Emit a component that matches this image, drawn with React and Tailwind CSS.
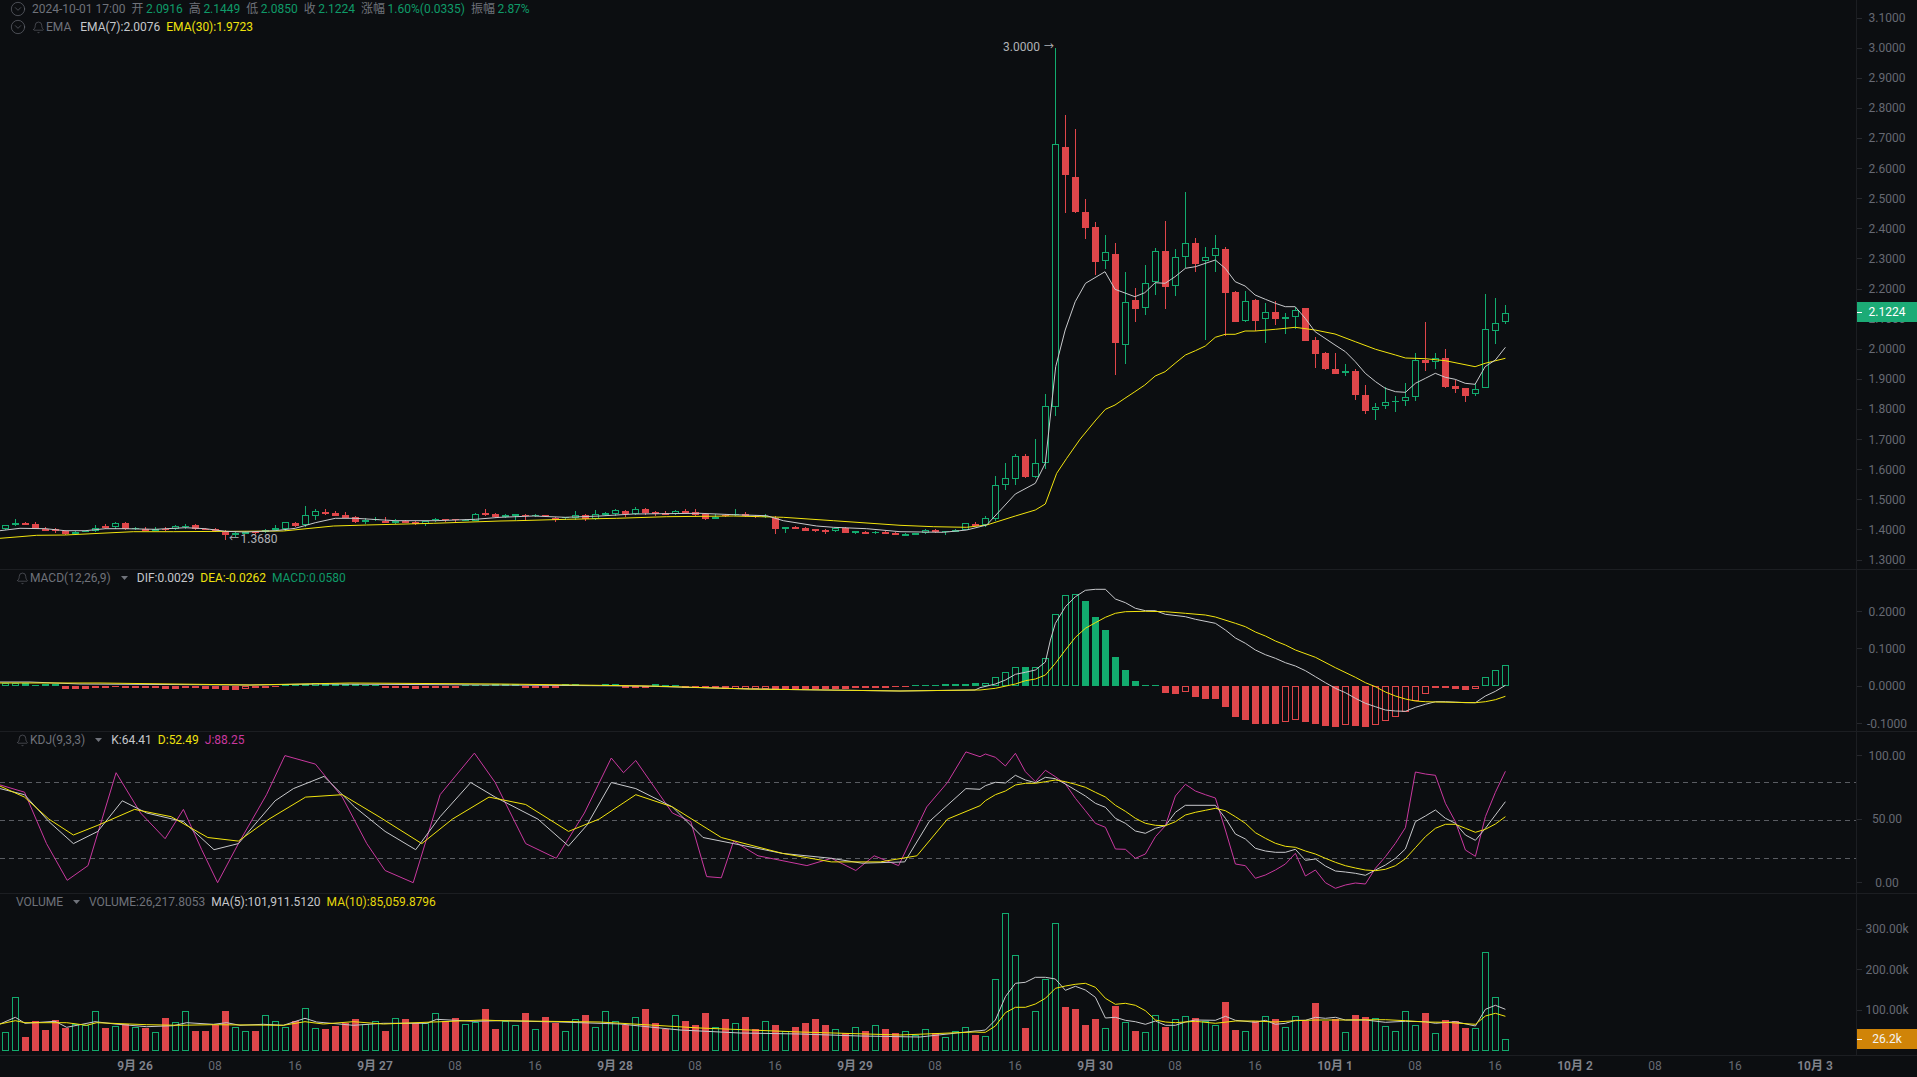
import { Bell, CircleChevronDown } from 'lucide-react'

const GREEN = '#12ab6e'
const RED = '#e0464a'
const BG = '#0c0e11'
const LINE_WHITE = '#c8c9cc'
const LINE_YELLOW = '#f2e40e'
const LINE_PINK = '#c9389f'

// Puntos calcados del gráfico: (x, y) de cada recorte a coordenadas de página
const trace = (x0, y0, sx, sy, pts) => pts.map(([x, y]) => [x0 + x / sx, y0 + y / sy])
const overview = pts => pts.map(([x, y]) => [x * 1.2226, y * 1.2226])
const toPoints = pts => pts.map(([x, y]) => `${x.toFixed(1)},${y.toFixed(1)}`).join(' ')

// [tipo, mecha alta, cuerpo arriba, cuerpo abajo, mecha baja] g hueca, s verde sólida, r roja
const candles = [
  ...[
    ['g',74,76,86,90],['g',58,70,76,80],['r',66,70,74,76],['r',66,73,86,88],['r',82,86,92,94],['r',84,87,92,100],['r',90,93,101,106],['g',92,96,101,104],['s',91,92,94,96],['g',76,83,94,97],
    ['r',72,78,83,88],['g',66,70,82,86],['r',66,70,88,90],['s',82,85,88,90],['r',82,86,92,94],['g',82,87,92,94],['r',80,86,88,92],['g',76,79,87,90],['s',72,78,82,88],['r',72,76,88,90],
    ['r',84,86,89,90],['r',84,88,93,95],['r',90,95,105,120],['s',96,100,105,110],['g',92,95,100,102],['r',92,95,98,100],['g',86,89,97,99],['s',76,85,91,94],['g',66,67,86,92],['r',66,70,78,82],
    ['g',18,46,76,82],['g',28,34,47,60],['r',26,36,42,44],['r',34,39,48,50],['r',36,45,53,55],['r',48,52,65,70],['s',54,60,66,72],['s',52,57,61,64],['r',52,62,69,70],['g',56,63,68,70],
    ['r',60,64,68,70],['r',64,67,72,76],['g',62,62,73,76],['s',55,58,61,66],['r',56,58,61,64],['r',56,58,61,64],['s',58,59,62,64],['g',40,41,62,64],['r',28,40,45,50],['r',40,42,51,54],
    ['s',42,46,51,54],['s',42,43,48,60],['r',42,46,48,62],['s',42,46,49,52],['r',45,46,49,52],['r',52,53,61,68],['s',52,52,54,62],['g',32,46,54,60],['r',42,46,57,62],['g',30,43,57,60],
    ['s',36,40,46,48],['g',28,31,41,48],['r',30,33,42,52],['g',22,28,41,46],['r',24,27,39,46],['r',34,37,41,48],['r',34,40,44,46],['g',30,34,43,46],['r',28,34,38,40],['r',28,37,44,48],
    ['r',38,43,56,58],['g',42,50,56,58],['r',42,46,47,50],['s',28,43,46,50],['r',36,42,47,52],['r',44,47,51,54],['s',42,48,52,54],['r',48,54,87,102],['s',80,82,86,98],['r',78,81,87,88],
    ['r',82,84,92,94],['r',86,87,92,94],['r',88,90,95,102],['g',84,85,94,96],['r',82,85,98,100],['s',92,94,98,102],['r',94,96,101,102],['s',92,95,98,100],['r',92,95,101,102],['r',96,98,104,105],
    ['g',98,102,104,105],['s',98,100,104,105],['g',86,91,100,102],['r',86,91,96,98],['s',92,94,96,104],['g',88,91,96,98],
  ].map(([k, ...v]) => [k, ...v.map(z => 500 + z / 3)]),
  ...[
    ['g',430,430,450,452],['r',426,432,438,438],['g',408,415,436,440],['g',288,316,416,422],['g',250,295,316,330],['g',222,229,298,315],['r',222,228,290,295],['g',178,250,290,296],['g',42,79,250,266],
  ].map(([k, ...v]) => [k, ...v.map(z => 380 + z / 3)]),
  ...[
    ['g',85,373,1160,1188],['r',285,381,464,580],['r',328,472,575,580],['r',536,576,623,656],['r',605,622,725,765],['g',646,697,724,748],['r',670,703,968,1067],['g',757,847,974,1032],['r',803,840,866,905],['g',736,788,865,885],
    ['g',685,694,787,825],['r',603,694,800,868],['g',687,712,799,828],['g',517,670,712,745],['r',655,670,731,757],['g',680,712,724,958],['g',644,685,709,754],['r',680,688,818,948],['r',812,817,905,905],['g',813,842,904,905],
    ['r',838,840,902,935],['g',848,877,898,967],['r',843,877,896,916],['s',880,892,896,943],['g',860,869,892,925],['r',865,865,962,965],['r',950,961,1001,1042],['r',995,999,1047,1050],['r',1000,1047,1061,1064],['g',1032,1053,1060,1068],
    ['r',1046,1053,1124,1140],['r',1096,1126,1172,1184],['g',1150,1160,1171,1200],['g',1100,1147,1159,1165],['s',1127,1144,1147,1175],['g',1090,1132,1142,1160],['g',998,1021,1132,1142],['r',905,1020,1028,1053],['g',1000,1015,1027,1048],['r',988,1015,1100,1105],
    ['r',1080,1098,1106,1118],['r',1105,1105,1127,1148],['g',1093,1106,1123,1128],['g',822,926,1105,1105],['g',835,908,934,972],['g',856,878,907,912],
  ].map(([k, ...v]) => [k, ...v.map(z => 20 + z / 3)]),
]

const ema7 = [
  ...trace(0, 500, 3, 3, [[0,92],[60,85],[136,86],[196,92],[256,92],[316,86],[376,86],[466,88],[556,83],[616,86],[676,94],[736,96],[826,92],[886,85],[946,68],[1006,55],[1066,55],[1186,62],[1306,62],[1426,58],[1500,52]]),
  ...trace(500, 500, 3, 3, [[100,48],[196,52],[300,48],[400,42],[600,40],[700,44],[800,47],[850,62],[950,78],[1000,82],[1100,86],[1200,95],[1330,97],[1400,90]]),
  ...trace(960, 380, 3, 3, [[80,435],[166,342],[226,310],[256,250]]),
  ...trace(960, 20, 2.613, 3, [[250,1040],[275,930],[301,845],[328,790],[379,755],[405,808],[457,830],[483,818],[510,788],[536,790],[562,770],[589,745],[615,740],[667,720],[693,745],[719,785],[745,798],[771,825],[798,838],[824,850],[850,860],[876,860],[902,895],[928,935],[980,975],[1007,995],[1033,1025],[1059,1060],[1086,1085],[1111,1105],[1138,1115],[1164,1117],[1190,1090],[1216,1075],[1242,1060],[1268,1072],[1294,1078],[1320,1090],[1346,1093],[1372,1040],[1399,1020],[1425,982]]),
]
const ema30 = [
  ...trace(0, 500, 3, 3, [[0,115],[60,110],[110,106],[196,105],[300,100],[400,95],[520,95],[700,94],[850,93],[1000,78],[1100,75],[1300,70],[1500,63]]),
  ...trace(500, 500, 3, 3, [[50,62],[200,58],[350,55],[500,50],[700,48],[850,52],[1000,62],[1200,76],[1300,80],[1400,82]]),
  ...trace(960, 380, 3, 3, [[80,435],[166,408],[226,390],[256,372],[290,280],[320,235],[360,178]]),
  ...trace(960, 20, 2.613, 3, [[355,1200],[380,1168],[405,1155],[431,1135],[457,1115],[483,1095],[510,1068],[536,1055],[562,1030],[589,1005],[615,992],[641,978],[667,952],[693,943],[719,943],[745,933],[771,933],[824,928],[876,922],[928,930],[980,942],[1033,965],[1086,988],[1138,1005],[1164,1014],[1216,1016],[1268,1022],[1346,1040],[1372,1030],[1425,1015]]),
]

// MACD: altura en px hasta la vela 97 (negativo = rojo)
const macdLeft = [3,3,3,1,2,2,-3,-3,-3,-2,-2,-1,-2,-2,-2,-2,-3,-3,-2,-2,-3,-3,-4,-4,-3,-2,-2,-1,1,1,2,3,3,2,2,2,1,1,-2,-2,-2,-3,-2,-2,-2,-2,1,1,1,2,2,2,-2,-2,-2,-2,2,2,1,1,2,2,-2,-2,-2,2,1,1,-2,-2,-2,-2,-3,-3,-3,-3,-3,-4,-3,-3,-3,-3,-3,-3,-3,-2,-2,-2,-2,-1,-1,1,1,1,2,2,2,3]
const macdHollow = new Set([0, 1, 24, 25, 26, 30, 31, 73, 74, 75, 76])
const macdRight = [
  ['h',368],['h',350],['h',337],['h',320],['s',322],['h',322],['h',295],['h',163],['h',106],['h',103],['s',123],['s',171],['s',210],['s',291],['s',330],['s',363],['s',376],['s',376],
  ['s',398],['s',401],['h',397],['s',411],['s',416],['s',416],['s',440],['s',470],['s',479],['s',491],['s',491],['s',491],['h',487],['h',479],['s',485],['s',491],['s',497],['s',500],['h',494],['s',497],['s',500],['h',494],['h',482],['h',470],['h',455],['h',422],['h',401],['s',384],['s',384],['s',387],['s',390],['h',386],
  ['h',352],['h',331],['h',316],
]
const macdDif = [
  ...[[0,682],[30,682],[80,684],[250,685],[320,684],[500,685],[640,686],[750,689],[900,691],[975,690]],
  ...trace(980, 560, 2.8, 3, [[0,383],[43,372],[71,360],[99,343],[127,337],[155,330],[183,306],[197,240],[211,190],[239,140],[267,110],[295,91],[323,88],[351,88],[379,117],[407,128],[435,145],[463,152],[491,152],[519,163],[575,170],[603,178],[659,190],[687,210],[715,234],[743,250],[771,270],[799,284],[827,295],[855,308],[883,318],[911,332],[939,350],[967,368],[995,385],[1023,398],[1051,415],[1079,430],[1107,440],[1135,450],[1163,453],[1191,454],[1219,442],[1247,433],[1275,425],[1303,425],[1359,428],[1387,428],[1415,408],[1443,394],[1471,376]]),
]
const macdDea = [
  ...[[0,683],[100,683],[250,685],[350,683],[500,684],[650,686],[750,689],[900,691],[975,690]],
  ...trace(980, 560, 2.8, 3, [[0,390],[43,385],[99,372],[127,362],[155,357],[183,345],[211,310],[239,270],[267,232],[295,205],[323,188],[351,172],[379,160],[407,155],[463,154],[519,155],[575,160],[631,165],[659,171],[715,190],[743,200],[771,216],[799,228],[827,243],[855,255],[883,270],[939,292],[995,323],[1051,352],[1079,368],[1107,380],[1135,396],[1163,408],[1191,417],[1219,423],[1247,425],[1275,426],[1331,427],[1387,428],[1415,425],[1443,419],[1471,409]]),
]

const kdjJ = [
  ...overview([[0,642],[20,648],[38,690],[55,720],[72,708],[95,632],[115,665],[135,686],[150,662],[165,695],[178,722],[195,690],[218,650],[233,618],[258,625],[280,652],[300,690],[315,712],[338,722],[360,650],[388,616],[405,640],[430,690],[455,702],[478,665],[500,620],[510,632],[520,622],[550,665],[565,672],[578,717],[590,718],[600,688],[620,700],[660,708],[680,702],[700,712],[715,700],[735,708],[758,660],[775,640],[790,615]]),
  ...trace(980, 560, 2.8, 3, [[0,590],[15,582],[43,592],[71,618],[99,580],[127,635],[155,665],[183,631],[211,650],[239,672],[267,715],[295,752],[323,790],[351,802],[379,867],[407,868],[435,895],[463,882],[491,830],[519,797],[547,708],[575,673],[603,693],[631,704],[659,714],[687,810],[715,912],[743,917],[771,955],[799,945],[827,930],[855,912],[883,880],[911,948],[939,930],[967,968],[995,985],[1023,975],[1051,969],[1079,972],[1107,925],[1135,890],[1163,850],[1191,803],[1219,636],[1247,642],[1275,646],[1303,730],[1331,785],[1359,870],[1387,889],[1415,770],[1443,697],[1471,634]]),
]
const kdjK = [
  ...overview([[0,645],[20,650],[40,672],[60,690],[80,680],[100,655],[120,665],[150,672],[175,695],[195,690],[225,655],[240,645],[265,635],[290,660],[315,680],[340,695],[360,668],[385,640],[405,652],[440,670],[465,692],[480,675],[500,640],[520,645],[550,660],[575,685],[600,690],[640,698],[680,702],[705,706],[740,705],[760,672],[790,645]]),
  ...trace(980, 560, 2.8, 3, [[0,688],[15,677],[43,667],[71,669],[99,646],[127,660],[155,668],[183,652],[211,656],[239,672],[267,690],[295,708],[323,730],[351,742],[379,775],[407,790],[435,813],[463,820],[491,805],[519,797],[547,757],[575,736],[659,736],[687,775],[715,822],[743,837],[771,865],[799,873],[827,877],[855,877],[883,868],[911,901],[939,897],[967,918],[995,933],[1023,936],[1051,940],[1079,946],[1107,930],[1135,915],[1163,895],[1191,867],[1219,785],[1247,768],[1275,750],[1303,775],[1331,790],[1359,825],[1387,841],[1415,805],[1443,765],[1471,725]]),
]
const kdjD = [
  ...overview([[0,643],[20,652],[40,670],[60,683],[80,675],[110,662],[140,668],[170,685],[195,688],[220,670],[250,652],[280,650],[310,668],[345,690],[370,670],[400,652],[430,658],[465,680],[490,670],[520,650],[550,660],[590,685],[640,698],[680,705],[720,705],[750,700],[775,670]]),
  ...trace(980, 560, 2.8, 3, [[0,737],[15,722],[43,704],[71,693],[99,675],[127,670],[155,670],[183,665],[211,660],[239,665],[267,673],[295,682],[323,697],[351,711],[379,736],[407,754],[435,775],[463,790],[491,796],[519,797],[547,785],[575,765],[603,757],[631,751],[659,745],[687,752],[715,770],[743,790],[771,818],[799,835],[827,850],[855,859],[883,862],[911,873],[939,882],[967,895],[995,907],[1023,917],[1051,924],[1079,930],[1107,932],[1135,928],[1163,917],[1191,896],[1219,863],[1247,830],[1275,805],[1303,793],[1331,793],[1359,805],[1387,817],[1415,808],[1443,792],[1471,770]]),
]

const VOL_BASE = 1051
const volLeft = [
  ['g',455],['g',352],['r',471],['r',424],['r',450],['r',420],['r',444],['g',431],['g',434],['g',394],['r',444],['g',439],['r',432],['g',441],['r',444],['g',457],['r',414],['g',427],['g',394],['r',453],['r',453],['r',435],['r',393],['g',441],['g',454],
  ['r',453],['g',406],['g',424],['g',441],['r',423],['g',385],['g',445],['r',447],['r',438],['r',430],['r',417],['g',432],['g',424],['r',453],['g',415],['r',417],['r',430],['g',430],['g',400],['r',424],['r',414],['g',433],['g',427],['r',387],['r',447],
]
const volMid = [30,26,38,22,34,28,20,32,36,24,40,30,26,34,42,28,22,36,30,26,38,24,32,28,34,22,30,26,20,24,28,32,26,22,18,24,20,26,22,18,20,16,22,18,14,20,24,16]
const volRight = [
  ['g',469],['g',298],['g',100],['g',226],['r',444],['g',394],['g',298],['g',130],['r',381],['r',387],['r',435],['r',417],['g',445],['r',378],['g',427],['r',453],['g',457],['g',406],['r',441],['g',418],['g',409],['r',414],['g',423],['g',436],['r',366],['r',450],
  ['g',454],['r',423],['g',409],['r',417],['g',442],['g',409],['r',423],['r',369],['r',423],['r',417],['g',457],['r',405],['r',411],['g',414],['g',439],['g',454],['g',394],['g',436],['r',399],['g',460],['r',420],['r',423],['r',444],['g',445],['g',217],['g',352],['g',478],
]
const volBars = [
  ...volLeft.map(([c, z]) => [c, 880 + z / 3]),
  ...volMid.map((h, i) => [candles[50 + i][0] === 'r' ? 'r' : 'g', VOL_BASE - h]),
  ...volRight.map(([c, z]) => [c, 880 + z / 3]),
]
const volMa5 = [
  ...trace(0, 880, 3, 3, [[0,432],[46,412],[75,430],[165,424],[200,442],[240,434],[285,425],[345,432],[440,440],[520,437],[560,428],[640,433],[680,428],[720,436],[790,433],[850,436],[915,415],[950,426],[1060,436],[1150,430],[1280,430],[1310,418],[1420,424],[1500,422]]),
  ...[[560,1022],[620,1024],[680,1030],[740,1033],[800,1034],[860,1036],[920,1037],[975,1031]],
  ...trace(980, 880, 2.8, 3, [[0,452],[15,450],[43,420],[71,350],[99,310],[127,307],[155,292],[183,292],[211,297],[239,331],[267,319],[295,330],[323,352],[351,414],[379,412],[407,421],[435,425],[463,433],[491,423],[519,436],[547,436],[575,426],[603,420],[659,421],[687,409],[715,421],[771,427],[799,421],[827,433],[855,430],[883,421],[911,421],[939,412],[967,415],[995,412],[1023,420],[1079,420],[1135,427],[1191,424],[1247,425],[1275,430],[1331,425],[1387,438],[1415,388],[1443,376],[1471,388]]),
]
const volMa10 = [
  ...trace(0, 880, 3, 3, [[0,432],[46,422],[75,428],[200,428],[260,436],[290,428],[440,434],[540,436],[640,434],[850,436],[915,425],[970,432],[1060,425],[1150,432],[1300,426],[1450,420],[1500,422]]),
  ...[[600,1022],[700,1028],[800,1032],[900,1035],[975,1032]],
  ...trace(980, 880, 2.8, 3, [[0,457],[15,457],[43,438],[71,398],[99,382],[127,382],[155,372],[183,355],[211,325],[239,318],[267,313],[295,310],[323,322],[351,355],[379,373],[407,370],[435,376],[463,392],[491,420],[519,426],[547,428],[603,424],[659,430],[715,423],[771,423],[827,426],[883,422],[939,420],[1023,420],[1135,419],[1191,422],[1247,426],[1303,427],[1387,433],[1415,408],[1443,400],[1471,409]]),
]

function Bar({ i, y0, y1, color, hollow }) {
  const top = Math.round(Math.min(y0, y1))
  const bottom = Math.round(Math.max(y0, y1))
  const x = i * 10 + 2
  if (hollow) {
    return <rect x={x + 0.5} y={top + 0.5} width={6} height={Math.max(bottom - top - 1, 1)} fill={BG} stroke={color} strokeWidth={1} />
  }
  return <rect x={x} y={top} width={7} height={Math.max(bottom - top, 1)} fill={color} />
}

function Line({ points, color }) {
  return <polyline points={toPoints(points)} fill="none" stroke={color} strokeWidth={1} strokeLinejoin="round" />
}

function PriceChart() {
  return (
    <svg className="block w-full h-full" viewBox="0 0 1857 569">
      <g shapeRendering="crispEdges">
        {candles.map(([kind, hi, top, bottom, lo], i) => {
          const color = kind === 'r' ? RED : GREEN
          return (
            <g key={i}>
              <rect x={i * 10 + 5} y={Math.round(hi)} width={1} height={Math.max(Math.round(lo - hi), 1)} fill={color} />
              <Bar i={i} y0={top} y1={bottom} color={color} hollow={kind === 'g'} />
            </g>
          )
        })}
      </g>
      <Line points={ema30} color={LINE_YELLOW} />
      <Line points={ema7} color={LINE_WHITE} />
    </svg>
  )
}

function MacdChart() {
  return (
    <svg className="block w-full h-full" viewBox="0 570 1857 161">
      <g shapeRendering="crispEdges">
        {macdLeft.map((h, i) => (
          <Bar key={i} i={i} y0={686} y1={686 - h} color={h > 0 ? GREEN : RED} hollow={macdHollow.has(i)} />
        ))}
        {macdRight.map(([kind, z], i) => (
          <Bar key={i} i={i + 98} y0={686} y1={560 + z / 3} color={z < 378 ? GREEN : RED} hollow={kind === 'h'} />
        ))}
      </g>
      <Line points={macdDif} color={LINE_WHITE} />
      <Line points={macdDea} color={LINE_YELLOW} />
    </svg>
  )
}

function KdjChart() {
  return (
    <svg className="block w-full h-full" viewBox="0 732 1857 161">
      {[782, 820, 858].map(y => (
        <line key={y} x1={0} x2={1857} y1={y + 0.5} y2={y + 0.5} stroke="#5a5c62" strokeWidth={1} strokeDasharray="5 4" />
      ))}
      <Line points={kdjJ} color={LINE_PINK} />
      <Line points={kdjK} color={LINE_WHITE} />
      <Line points={kdjD} color={LINE_YELLOW} />
    </svg>
  )
}

function VolumeChart() {
  return (
    <svg className="block w-full h-full" viewBox="0 894 1857 161">
      <g shapeRendering="crispEdges">
        {volBars.map(([c, top], i) => (
          <Bar key={i} i={i} y0={VOL_BASE} y1={top} color={c === 'r' ? RED : GREEN} hollow={c === 'g'} />
        ))}
      </g>
      <Line points={volMa5} color={LINE_WHITE} />
      <Line points={volMa10} color={LINE_YELLOW} />
    </svg>
  )
}

function Caret() {
  return (
    <svg width="7" height="4" viewBox="0 0 7 4" className="shrink-0">
      <path d="M0 0h7L3.5 4z" fill="#6f727a" />
    </svg>
  )
}

function AxisRow({ label, className }) {
  return (
    <div className={`relative flex items-center justify-center shrink-0 ${className}`}>
      <span className="absolute left-0 w-[5px] h-px bg-[#26282d]" />
      <span>{label}</span>
    </div>
  )
}

function Pane({ className, axis, children }) {
  return (
    <div className={`flex shrink-0 border-b border-[#1c1e22] ${className}`}>
      <div className="relative w-[1857px] shrink-0">{children}</div>
      <div className="relative flex flex-col flex-1 overflow-hidden border-l border-[#1c1e22] -ml-px text-[#666973]">{axis}</div>
    </div>
  )
}

const priceTicks = ['3.1000','3.0000','2.9000','2.8000','2.7000','2.6000','2.5000','2.4000','2.3000','2.2000','2.1000','2.0000','1.9000','1.8000','1.7000','1.6000','1.5000','1.4000','1.3000']
const timeLabels = [
  ['9月 26', true],['08'],['16'],['9月 27', true],['08'],['16'],['9月 28', true],['08'],['16'],['9月 29', true],['08'],['16'],
  ['9月 30', true],['08'],['16'],['10月 1', true],['08'],['16'],['10月 2', true],['08'],['16'],['10月 3', true],
]
const ohlc = [['开','2.0916'],['高','2.1449'],['低','2.0850'],['收','2.1224'],['涨幅','1.60%(0.0335)'],['振幅','2.87%']]

export default function App() {
  return (
    <div className="flex flex-col w-[1917px] h-[1077px] overflow-hidden bg-[#0c0e11] font-['Roboto','Noto_Sans_CJK_SC',sans-serif] text-[12px] leading-none text-[#6f727a]">
      <Pane
        className="h-[570px]"
        axis={
          <>
            <div className="flex flex-col pt-[3px]">
              {priceTicks.map(t => <AxisRow key={t} label={t} className="h-[30.11px]" />)}
            </div>
            <div className="absolute left-0 right-0 top-[302px] h-[20px] flex items-center justify-center bg-[#1cab76] text-white">
              <span className="absolute left-0 w-[5px] h-px bg-white" />
              2.1224
            </div>
          </>
        }
      >
        <PriceChart />
        <div className="absolute left-[10px] top-0 flex flex-col">
          <div className="flex items-center h-[18px] gap-[6px]">
            <CircleChevronDown size={16} strokeWidth={1} className="text-[#6a6d75]" />
            <span>2024-10-01 17:00</span>
            {ohlc.map(([k, v]) => (
              <span key={k} className="flex gap-[2.5px]">
                {k}<span className="text-[#0f9a68]">{v}</span>
              </span>
            ))}
          </div>
          <div className="flex items-center h-[18px]">
            <CircleChevronDown size={16} strokeWidth={1} className="text-[#6a6d75] mr-[6px]" />
            <Bell size={13} strokeWidth={1} className="mr-[1px]" />
            <span>EMA</span>
            <span className="ml-[9px] text-[#c5c7cb]">EMA(7):2.0076</span>
            <span className="ml-[6px] text-[#efe20e]">EMA(30):1.9723</span>
          </div>
        </div>
        <div className="absolute left-[1003px] top-[41px] flex items-center gap-[4px] text-[#b0b2b6]">
          <span>3.0000</span><span className="w-[9px] text-[10px]">→</span>
        </div>
        <div className="absolute left-[229px] top-[533px] flex items-center gap-[2.5px] text-[#b0b2b6]">
          <span className="w-[9px] text-[10px]">←</span><span>1.3680</span>
        </div>
      </Pane>

      <Pane
        className="h-[162px]"
        axis={
          <div className="flex flex-col pt-[23px]">
            {['0.2000','0.1000','0.0000','-0.1000'].map(t => <AxisRow key={t} label={t} className="h-[37.3px]" />)}
          </div>
        }
      >
        <MacdChart />
        <div className="absolute left-[16px] top-0 h-[16px] flex items-center">
          <Bell size={13} strokeWidth={1} className="mr-[1px]" />
          <span>MACD(12,26,9)</span>
          <span className="ml-[10px]"><Caret /></span>
          <span className="ml-[9px] text-[#c5c7cb]">DIF:0.0029</span>
          <span className="ml-[6px] text-[#efe20e]">DEA:-0.0262</span>
          <span className="ml-[6px] text-[#0f9a68]">MACD:0.0580</span>
        </div>
      </Pane>

      <Pane
        className="h-[162px]"
        axis={
          <div className="flex flex-col -mt-[8px]">
            {['100.00','50.00','0.00'].map(t => <AxisRow key={t} label={t} className="h-[63.5px]" />)}
          </div>
        }
      >
        <KdjChart />
        <div className="absolute left-[16px] top-0 h-[16px] flex items-center">
          <Bell size={13} strokeWidth={1} className="mr-[1px]" />
          <span>KDJ(9,3,3)</span>
          <span className="ml-[10px]"><Caret /></span>
          <span className="ml-[9px] text-[#c5c7cb]">K:64.41</span>
          <span className="ml-[6px] text-[#efe20e]">D:52.49</span>
          <span className="ml-[6px] text-[#c9389f]">J:88.25</span>
        </div>
      </Pane>

      <Pane
        className="h-[162px]"
        axis={
          <>
            <div className="flex flex-col pt-[15px]">
              {['300.00k','200.00k','100.00k'].map(t => <AxisRow key={t} label={t} className="h-[40.5px]" />)}
            </div>
            <div className="absolute left-0 right-0 top-[135px] h-[20px] flex items-center justify-center bg-[#d08408] text-[#f3f3f3]">
              <span className="absolute left-0 w-[5px] h-px bg-white" />
              26.2k
            </div>
          </>
        }
      >
        <VolumeChart />
        <div className="absolute left-[16px] top-0 h-[16px] flex items-center">
          <span>VOLUME</span>
          <span className="ml-[10px]"><Caret /></span>
          <span className="ml-[9px]">VOLUME:26,217.8053</span>
          <span className="ml-[6px] text-[#c5c7cb]">MA(5):101,911.5120</span>
          <span className="ml-[6px] text-[#e6d80c]">MA(10):85,059.8796</span>
        </div>
      </Pane>

      <div className="flex items-center h-[21px] pl-[95px] pb-[1px] text-[#666973]">
        {timeLabels.map(([t, day], i) => (
          <span key={i} className={`w-[80px] shrink-0 text-center ${day ? 'font-semibold text-[#81848c]' : ''}`}>{t}</span>
        ))}
      </div>
    </div>
  )
}
